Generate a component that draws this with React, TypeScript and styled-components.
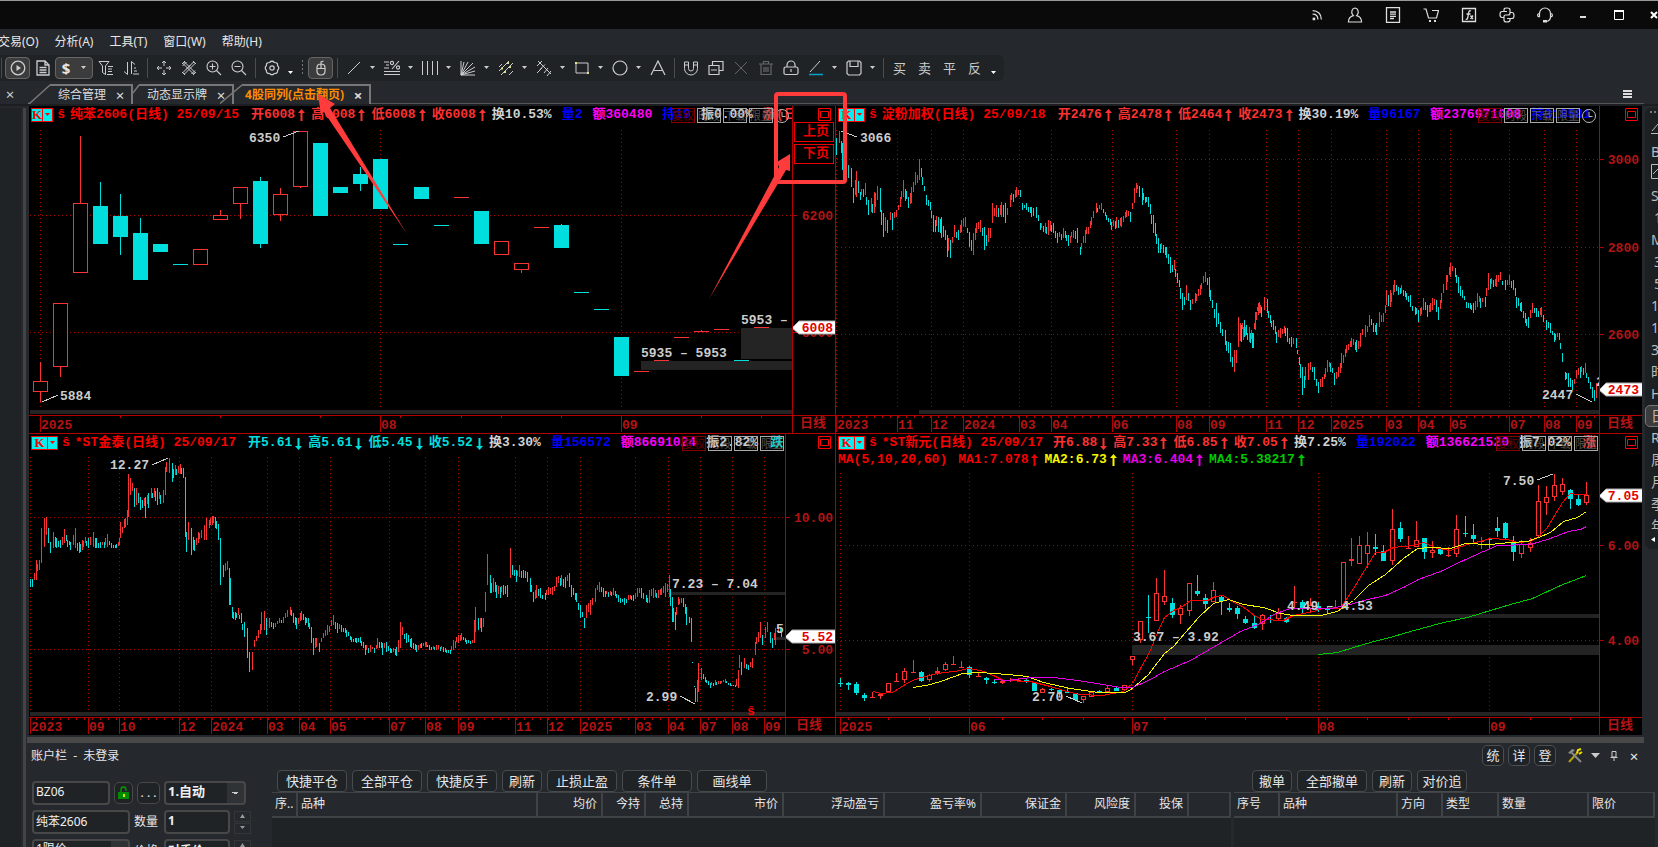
import React from 'react';
import styled, { createGlobalStyle } from 'styled-components';

const UI_FONT = '"Noto Sans", "Noto Sans CJK SC", sans-serif';
const CHART_FONT = '"Liberation Mono", "Noto Sans CJK SC", monospace';
const RED = '#fa3232';
const CYAN = '#00dede';
const AXIS = '#b40000';

const GlobalStyle = createGlobalStyle`
  * { box-sizing: border-box; }
  body { margin: 0; background: #25282d; overflow: hidden; font: 12px/16px ${UI_FONT}; color: #e6e6e6; }
  button, input, select { font: inherit; color: inherit; margin: 0; padding: 0; }
  button { background: none; border: 0; }
`;

/* ---------- page shell ---------- */
const Page = styled.div`position: relative; display: flex; flex-direction: column; width: 100%; height: 100vh; min-height: 600px; overflow: hidden;`;
const TitleBar = styled.header`display: flex; justify-content: flex-end; flex: none; height: 29px; margin-right: -14px; border-top: 1px solid #999; background: #0a0a0a;`;
const TitleButton = styled.button<{ $w?: number }>`display: flex; align-items: center; justify-content: center; flex: none; width: ${p => p.$w ?? 38}px; height: 28px; color: #ddd;`;
const MenuBar = styled.nav`display: flex; flex: none; align-items: center; gap: 16px; height: 26px; margin-left: -2px;`;
const MenuItem = styled.button`white-space: nowrap; line-height: 16px;`;
const Toolbar = styled.div`display: flex; flex: none; align-items: center; align-self: flex-start; height: 26px; margin-left: -3px; padding-right: 4px; background: #1f2326; border-radius: 0 6px 6px 0;`;
const ToolButton = styled.button<{ $on?: boolean; $dim?: boolean }>`
  display: flex; align-items: center; justify-content: center; width: 25px; height: 22px;
  font-size: 13px; line-height: 20px; color: ${p => (p.$dim ? '#666' : '#ccc')};
  border-radius: 4px; border: 1px solid ${p => (p.$on ? '#666' : 'transparent')}; background: ${p => (p.$on ? '#3c3c3c' : 'none')};
`;
const CurrencyButton = styled.button`display: flex; align-items: center; justify-content: center; gap: 11px; width: 38px; height: 22px; border: 1px solid #666; border-radius: 4px; background: #3c3c3c; font-size: 15px; font-weight: 700;`;
const CaretButton = styled.button<{ $low?: boolean }>`display: flex; justify-content: center; align-items: ${p => (p.$low ? 'flex-end' : 'center')}; width: 13px; height: 14px;`;
const ToolSep = styled.span`width: 8px; height: 20px; background: linear-gradient(#4a4d50, #4a4d50) center / 1px 100% no-repeat;`;
const ToolGrip = styled.span`width: 10px; height: 16px; margin-right: 1px; background: repeating-linear-gradient(#777 0 2px, transparent 2px 4px) center / 1px 100% no-repeat;`;

const TabStrip = styled.div`display: flex; flex: none; height: 25px; padding-top: 3px; border-bottom: 2px solid #1c1e21;`;
const DockClose = styled.button`width: 28px; height: 20px; padding-right: 8px; font-size: 15px; line-height: 18px; color: #ccc;`;
const Tab = styled.div<{ $overlap?: boolean }>`display: flex; flex: none; position: relative; margin-left: ${p => (p.$overlap ? -14 : 0)}px;`;
const TabFace = styled.div<{ $on?: boolean }>`
  display: flex; align-items: center; height: 20px; gap: 8px; padding: 0 5px 0 ${p => (p.$on ? 3 : 8)}px; border: solid #777; border-width: 2px 2px 0 0;
  color: ${p => (p.$on ? '#ff8c00' : '#ddd')}; font-weight: ${p => (p.$on ? 700 : 400)};
`;
const TabLabel = styled.button`white-space: nowrap; font-weight: inherit;`;
const TabClose = styled.button`width: 12px; font-size: 15px; line-height: 16px; color: #ddd;`;
const TabRule = styled.div`flex: 1; align-self: flex-end; height: 20px; border-bottom: 1px solid #555;`;
const TabMenu = styled.button`display: flex; align-items: center; justify-content: flex-end; width: 40px; height: 20px; padding: 0 12px 0 0; margin: 0 14px 0 -40px;`;

const Workspace = styled.div`display: flex; flex: 1; min-height: 0;`;
const LeftDock = styled.aside`flex: none; width: 29px; margin-top: 2px; background: linear-gradient(90deg, #1f2326 0 21px, #25282d 21px 23px, #444 23px 26px, #25282d 26px);`;
const Center = styled.main`display: flex; flex-direction: column; flex: 1; min-width: 0;`;
const RightDock = styled.aside`flex: none; width: 16px; padding-left: 3px; overflow: hidden;`;
const PeriodList = styled.div`display: flex; flex-direction: column; width: 40px; margin-top: 2px; background: #1c2023; border-radius: 6px; color: #bbb; font-size: 14px;`;
const PeriodButton = styled.button<{ $on?: boolean; $indent?: boolean }>`
  flex: none; width: 40px; height: 22px; padding-left: ${p => (p.$indent ? 8 : 5)}px; line-height: 20px; text-align: left;
  border-radius: 5px; border: 1px solid ${p => (p.$on ? '#777' : 'transparent')}; background: ${p => (p.$on ? '#3c3c3c' : 'none')};
`;
const CollapseButton = styled.button`display: flex; flex: none; align-items: flex-start; width: 40px; height: 12px; padding: 0 0 0 6px;`;
const DockDots = styled.span`flex: none; height: 11px; margin-left: 5px; background: repeating-linear-gradient(90deg, #777 0 2px, transparent 2px 4px) 0 3px / 100% 2px no-repeat;`;

/* ---------- charts ---------- */
const ChartGrid = styled.div`display: grid; flex: 1; min-height: 0; grid-template: 328fr 301fr / 807fr 806fr; background: #000;`;
const ChartPanel = styled.section<{ $axis: number; $left?: boolean; $top?: boolean }>`
  display: grid; grid-template-columns: minmax(0, 1fr) ${p => p.$axis}px; min-width: 0; min-height: 0; overflow: hidden;
  border: solid ${AXIS}; border-width: 0 ${p => (p.$left ? 1 : 0)}px ${p => (p.$top ? 1 : 0)}px 0;
  font: bold 13px/16px ${CHART_FONT};
`;
const PlotColumn = styled.div`position: relative; display: flex; flex-direction: column; min-width: 0; min-height: 0; overflow: hidden;`;
const AxisColumn = styled.div`display: flex; flex-direction: column; min-height: 0; border-left: 1px solid ${AXIS};`;
const Legend = styled.div`display: flex; flex: none; align-items: center; height: 18px; padding-left: 2px; white-space: pre;`;
const LegendItem = styled.span<{ $c: string; $gap?: number }>`display: flex; flex: none; align-items: center; color: ${p => p.$c}; margin-left: ${p => p.$gap ?? 10}px;`;
const ArrowCell = styled.span`display: flex; justify-content: center; width: 13px;`;
const KindSwitch = styled.button`display: flex; align-items: stretch; width: 27px; height: 14px; margin-right: 2px; background: #00f0f0; border: 1px solid red; color: red; font: bold 13px/12px "Liberation Serif", serif;`;
const KindLetter = styled.span`flex: 1; border-right: 1px solid red;`;
const KindCaret = styled.span`display: flex; align-items: center; justify-content: center; width: 9px;`;
const Indicators = styled.div`display: flex; flex: none; height: 16px; padding-left: 2px; line-height: 14px; white-space: pre;`;
const Badges = styled.div<{ $right: number }>`position: absolute; top: 2px; right: ${p => p.$right}px; display: flex; align-items: center; gap: 2px;`;
const Badge = styled.button<{ $red?: boolean }>`
  width: 24px; height: 15px; font: 11px/13px ${UI_FONT}; white-space: nowrap; border: 1px solid ${p => (p.$red ? '#800' : '#aaa')};
  color: ${p => (p.$red ? '#700000' : 'rgba(140, 140, 140, 0.6)')};
`;
const Canvas = styled.svg`display: block; flex: 1; width: 100%; min-height: 0; font: bold 13px ${CHART_FONT};`;
const TimeScale = styled.svg`display: block; flex: none; width: 100%; height: 18px; border-top: 1px solid ${AXIS}; font: bold 13px ${CHART_FONT};`;
const PeriodLabel = styled.div<{ $pad: number }>`flex: none; height: 18px; padding-left: ${p => p.$pad}px; border-top: 1px solid ${AXIS}; color: #b41414; line-height: 16px;`;
const RestoreButton = styled.button`flex: none; width: 13px; height: 13px; margin: 2px 4px 1px auto;`;
const PageButton = styled.button`flex: none; width: 40px; height: 20px; margin: 0 0 2px 1px; border: 1px solid #e00; color: #e00; font: bold 13px/18px ${CHART_FONT}; padding-left: 4px;`;

/* ---------- account panel ---------- */
const Splitter = styled.div`flex: none; height: 6px; margin: 2px -2px 0; background: #484848;`;
const Account = styled.section`display: flex; flex-direction: column; flex: none; height: 104px; overflow: hidden; margin-right: -16px;`;
const AccountHead = styled.div`display: flex; flex: none; align-items: center; height: 27px; padding: 0 17px 2px 2px; white-space: pre;`;
const HeadTools = styled.div`display: flex; align-items: center; gap: 4px; margin-left: auto;`;
const ViewButtons = styled.div`display: flex; gap: 4px; margin-right: 5px;`;
const SquareButton = styled.button`width: 22px; height: 21px; border: 1px solid #4c4f52; border-radius: 5px; background: #1f2326; font-size: 13px; line-height: 17px;`;
const PlainButton = styled.button<{ $w: number }>`display: flex; align-items: center; justify-content: center; width: ${p => p.$w}px; height: 20px; font-size: 15px;`;
const AccountBody = styled.div`display: flex; flex: 1; min-height: 0;`;
const OrderForm = styled.form`display: flex; flex-direction: column; flex: none; gap: 5px; width: 243px; padding: 11px 0 0 3px;`;
const FormRow = styled.div`display: flex; flex: none; align-items: center; gap: 4px; height: 24px;`;
const Field = styled.input<{ $w: number; $b?: boolean }>`
  flex: none; width: ${p => p.$w}px; height: 24px; padding: 0 0 3px 2px; border: 2px solid #484848; border-radius: 4px; background: #1f2326; color: #f0f0f0; font-weight: ${p => (p.$b ? 700 : 400)};
`;
const Choice = styled.select<{ $w: number; $b?: boolean }>`
  appearance: none; flex: none; width: ${p => p.$w}px; height: 24px; padding: 0 0 4px 2px; border: 2px solid #484848; border-radius: 4px; color: #f0f0f0; font-size: ${p => (p.$b ? 13 : 12)}px; font-weight: ${p => (p.$b ? 700 : 400)};
  background: linear-gradient(45deg, transparent 50%, #ccc 50%) right 9px center / 3px 3px no-repeat, linear-gradient(-45deg, transparent 50%, #ccc 50%) right 6px center / 3px 3px no-repeat, linear-gradient(90deg, #1f2326 calc(100% - 17px), #303336 0);
`;
const FormLabel = styled.label`flex: none; width: 26px;`;
const SmallButton = styled.button<{ $w: number }>`display: flex; align-items: center; justify-content: center; width: ${p => p.$w}px; height: 22px; border: 1px solid #484848; border-radius: 5px; background: #1f2326;`;
const Spinner = styled.div`display: flex; flex-direction: column; gap: 1px;`;
const SpinButton = styled.button`display: flex; align-items: center; justify-content: center; width: 17px; height: 11px; border: 1px solid #333638;`;
const GridPane = styled.div<{ $w?: number }>`display: flex; flex-direction: column; flex: ${p => (p.$w ? `0 1 ${p.$w}px` : '1 1 0')}; min-width: 0; margin-right: 3px; overflow: hidden;`;
const ActionBar = styled.div<{ $pad: number }>`display: flex; flex: none; gap: 5px; height: 22px; padding-left: ${p => p.$pad}px;`;
const ActionButton = styled.button<{ $w: number }>`flex: none; width: ${p => p.$w}px; height: 22px; border: 1px solid #484b4e; border-radius: 4px; background: #1f2326; font-size: 13px; line-height: 19px; white-space: nowrap;`;
const TableArea = styled.div`flex: 1; background: #1f2326; overflow: hidden;`;
const Table = styled.table`width: 100%; border-collapse: collapse; table-layout: fixed; background: #25282d;`;
const Th = styled.th<{ $w?: number; $right?: boolean }>`
  width: ${p => (p.$w ? `${p.$w}px` : 'auto')}; height: 24px; padding: 0 4px 1px 3px; border: 1px solid #404346; border-width: 1px 2px 2px 0;
  font-weight: 400; text-align: ${p => (p.$right ? 'right' : 'left')}; white-space: nowrap; overflow: hidden;
`;
const Overlay = styled.svg`position: absolute; inset: 0; width: 100%; height: 100%; pointer-events: none;`;

/* ---------- icons ---------- */
const Glyph = ({ d, fill, children, size = 16, w = 1 }: { d?: string; fill?: string; children?: React.ReactNode; size?: number; w?: number }) => (
  <svg width={size} height={size} viewBox="0 0 16 16" fill="none" stroke="currentColor" strokeWidth={w} aria-hidden="true">
    {d && <path d={d} />}
    {fill && <path d={fill} fill="currentColor" stroke="none" />}
    {children}
  </svg>
);
const Caret = ({ c = '#ccc' }: { c?: string }) => (
  <svg width="5" height="4" viewBox="0 0 5 4" aria-hidden="true"><path d="M0 0h5L2.5 3z" fill={c} /></svg>
);
const Arrow = ({ up }: { up: boolean }) => (
  <ArrowCell>
    <svg width="7" height="13" viewBox="0 0 7 13" role="img" aria-label={up ? '涨' : '跌'} fill="currentColor">
      <path d={up ? 'M3.500 0L7 4H4.500v8h-2V4H0z' : 'M3.500 13L7 9H4.500V1h-2v8H0z'} />
    </svg>
  </ArrowCell>
);

const TITLE_ICONS: [string, React.ReactNode][] = [
  ['订阅', <Glyph size={14} w={1.4} d="M3 3c6 0 10 4 10 10M3 7c4 0 6 2 6 6" fill="M3 11h3v3H3z" />],
  ['用户', <Glyph w={1.2} d="M8 1a3.5 4 0 0 1 2.4 6.6L9.6 8.600c3 .8 5 2.600 5 6.400H1.400c0-3.800 2-5.600 5-6.400l-.8-1A3.500 4 0 0 1 8 1z" />],
  ['资讯', <Glyph w={1.3} d="M1.500 .7h13v14.600h-13zM5 5h6M5 7.200h6M5 9.400h6M5 11.500h4" />],
  ['商城', <Glyph w={1.2} d="M.5 2h2.500l2.500 9h8l2-7.500H9" fill="M6 13h2v2H6zM11 13h2v2h-2z" />],
  ['公式', <Glyph w={1.3} d="M1.500 1.500h13v13h-13zM10 4c-2-.8-2.200.5-2.500 2.500L6.700 11c-.3 1.200-1 1.500-2 1M5.500 7h4M9.500 8.500l2.500 3.500M12 8.500l-2.500 3.500" />],
  ['Python', <Glyph w={1.2} d="M5 4.500V2.700C5 1.300 6 1 8 1s3 .4 3 1.700V6c0 1.500-1 2-2 2H6.500C5.500 8 5 8.600 5 9.500v1H3C1.500 10.500 1 9.500 1 7.600s.6-3.100 2-3.100h5M11 11.500v1.800c0 1.300-1 1.700-3 1.700s-3-.4-3-1.700V10M11 5.500h2c1.500 0 2 1 2 2.900s-.6 3.100-2 3.100H8" />],
  ['客服', <Glyph w={1.2} d="M2.500 10V6.500a5.500 5.500 0 0 1 11 0V10M2.500 6.500C1 6.500.6 7.300.6 8.300S1 10 2.500 10M13.500 6.500c1.500 0 1.900.8 1.900 1.800s-.4 1.700-1.900 1.700c0 2.500-1.500 3.700-3.500 4.300" fill="M6 13h4v2.500H6z" />],
];

const I = {
  play: <Glyph fill="M6.500 5l4.500 3-4.500 3z"><circle cx="8" cy="8" r="6.800" strokeWidth="1.300" /></Glyph>,
  doc: <Glyph w={1.300} d="M2 1h8l4 4v10H2zM10 1v4h4M4.500 7.500h7M4.500 10h7M4.500 12.500h7" />,
  filter: <Glyph d="M1 1.500h10L7.500 6v8.500l-3-2V6zM10 6.500h5M10 9h4M10 11.500h4M9 14.500h6" />,
  sort: <Glyph d="M4.500 2v12.500L1 11.500M8.500 14V1.500L12 4.500M11 8h2M11 11h3M10 14h6" />,
  move: <Glyph d="M8 1v5M8 10v5M1 8h5M10 8h5M6 3l2-2 2 2M6 13l2 2 2-2M3 6L1 8l2 2M13 6l2 2-2 2" />,
  erase: <Glyph d="M2 3.500L3.500 2l10.500 10.500-1.500 1.500zM14 3.500L12.500 2 2 12.500 3.500 14zM1.500 6l4-4M5 9.500l4.500-4.500M10.500 14l3.500-3.500M1 4l3-3M12 1l3 3M1 12l3 3M15 12l-3 3" />,
  zoomIn: <Glyph w={1.100} d="M10.500 10.500L15 15M3.500 6.500h6M6.500 3.500v6"><circle cx="6.500" cy="6.500" r="5.500" /></Glyph>,
  zoomOut: <Glyph w={1.100} d="M10.500 10.500L15 15M3.500 6.500h6"><circle cx="6.500" cy="6.500" r="5.500" /></Glyph>,
  gear: <Glyph w={1.200} d="M5.500 2.500Q8 0 10.500 2.500Q14 2.500 13.500 5.500Q16 8 13.500 10.500Q14 13.500 10.500 13.500Q8 16 5.500 13.500Q2 13.500 2.500 10.500Q0 8 2.500 5.500Q2 2.500 5.500 2.500z"><circle cx="8" cy="8" r="2.200" /></Glyph>,
  mouse: <Glyph w={1.200} d="M4 7.500c0-2.500 1.500-3.500 4-3.500s4 1 4 3.500V11c0 2.500-1.500 4-4 4s-4-1.500-4-4zM4 8.500h8M8 4v4.500M8 4V2l2.500-1" />,
  line: <Glyph d="M2 14L14 2" />,
  percent: <Glyph w={1.100} d="M0 2h5M2 5h3M0 8h5M0 11.500h16M0 14.500h16M15 1L8 9"><circle cx="8" cy="3" r="1.600" /><circle cx="14" cy="7.500" r="1.600" /></Glyph>,
  bars: <Glyph d="M.5 1v14M5.500 1v14M10.500 1v14M15.500 1v14" />,
  fan: <Glyph d="M1 1v14h14M1 15L4 2M1 15L8 2M1 15L13 3M1 15L15 7M1 15l14-4" />,
  channel: <Glyph d="M1 11L11 1M3 15L15 3M1 7l3-3M11 15l4-4"><path d="M3 8.500h2M9 3h2M6 12h2M11 7h2" stroke="#dede90" strokeWidth="2" /></Glyph>,
  fork: <Glyph d="M2 1l13 13M1 6l5-5M4 9.500L9 4.500M8 13l4-5M11 16l4-5M1 13l5-5" />,
  rect: <Glyph d="M2 3h12v10H2z"><path d="M1 2h2v2H1zM13 12h2v2h-2z" fill="#e6e690" stroke="none" /></Glyph>,
  circle: <Glyph w={1.200}><circle cx="8" cy="8" r="7" /></Glyph>,
  text: <Glyph w={1.200} d="M1 15L8 1l7 14M4 10.500h8" />,
  magnet: <Glyph d="M1.500 2v6.500a6.500 6.500 0 0 0 13 0V2h-4v6.500a2.500 2.500 0 0 1-5 0V2zM1.500 5h4M10.500 5h4" />,
  copy: <Glyph w={1.200} d="M1 5.500h10v9H1zM4.500 5.500v-4h10.500v9h-4M3 10h6" />,
  cross: <Glyph d="M2 2l12 12M14 2L2 14" />,
  trash: <Glyph w={1.200} d="M1 4h14M3 4v10.500h10V4M5.500 4V1.500h5V4M6 7v5M8 7v5M10 7v5" />,
  lock: <Glyph w={1.200} d="M3 7h10q2 0 2 2v4q0 1.500-2 1.500H3q-2 0-2-1.500V9q0-2 2-2zM4 7V5a4 4 0 0 1 8 0v2M8 9v3" />,
  pen: <Glyph d="M2 12L12 1"><path d="M1 14.500h14" stroke="#00a0c8" strokeWidth="1.500" /></Glyph>,
  save: <Glyph w={1.200} d="M2.500 1h11L15 2.500v11L13.500 15h-11L1 13.500v-11zM4 1v5.500h8V1" />,
};

type Tool = { k: 'b' | 'd' | 's' | 'g' | 'c' | 'm'; label?: string; icon?: React.ReactNode; on?: boolean; dim?: boolean };
const TOOLS: Tool[] = [
  { k: 's' }, { k: 'b', label: '播放', icon: I.play, on: true }, { k: 'b', label: '文档', icon: I.doc },
  { k: 'm', label: '币种' }, { k: 'b', label: '筛选', icon: I.filter }, { k: 'b', label: '排序', icon: I.sort }, { k: 's' },
  { k: 'b', label: '移动', icon: I.move }, { k: 'b', label: '清除', icon: I.erase }, { k: 'b', label: '放大', icon: I.zoomIn }, { k: 'b', label: '缩小', icon: I.zoomOut }, { k: 's' },
  { k: 'b', label: '设置', icon: I.gear }, { k: 'c', label: '更多设置' }, { k: 'g' }, { k: 'b', label: '鼠标', icon: I.mouse, on: true }, { k: 's' },
  { k: 'd', label: '直线', icon: I.line }, { k: 'd', label: '百分比', icon: I.percent }, { k: 'd', label: '周期线', icon: I.bars }, { k: 'd', label: '扇形', icon: I.fan },
  { k: 'd', label: '通道', icon: I.channel }, { k: 'd', label: '叉线', icon: I.fork }, { k: 'd', label: '矩形', icon: I.rect }, { k: 'd', label: '圆形', icon: I.circle },
  { k: 'b', label: '文字', icon: I.text }, { k: 's' },
  { k: 'b', label: '磁吸', icon: I.magnet }, { k: 'b', label: '复制', icon: I.copy }, { k: 'b', label: '关闭', icon: I.cross, dim: true }, { k: 'b', label: '删除', icon: I.trash, dim: true },
  { k: 'b', label: '锁定', icon: I.lock }, { k: 'd', label: '颜色', icon: I.pen }, { k: 'd', label: '保存', icon: I.save }, { k: 's' },
  { k: 'b', label: '买', icon: '买' }, { k: 'b', label: '卖', icon: '卖' }, { k: 'b', label: '平', icon: '平' }, { k: 'b', label: '反', icon: '反' }, { k: 'c', label: '更多' },
];

const ToolItem = ({ t }: { t: Tool }) => {
  if (t.k === 's') return <ToolSep />;
  if (t.k === 'g') return <ToolGrip />;
  if (t.k === 'c') return <CaretButton $low aria-label={t.label}><Caret c="#fff" /></CaretButton>;
  if (t.k === 'm') return <CurrencyButton aria-label={t.label}>$<Caret /></CurrencyButton>;
  return (
    <>
      <ToolButton $on={t.on} $dim={t.dim} aria-label={t.label}>{t.icon}</ToolButton>
      {t.k === 'd' && <CaretButton aria-label={`${t.label}选项`}><Caret /></CaretButton>}
    </>
  );
};

/* ---------- chart data ---------- */
type Candle = [x: number, hi: number, top: number, bot: number, lo: number, up: number];

const BENZENE: [hi: number, top: number, bot: number, lo: number, up: number][] = [
  [362, 381, 392, 402, 1], [303, 303, 367, 377, 1], [136, 203, 273, 273, 1], [182, 206, 244, 244, 0], [194, 216, 237, 255, 0],
  [218, 233, 280, 280, 0], [244, 244, 252, 252, 0], [264, 264, 265, 265, 0], [249, 249, 265, 265, 1], [210, 215, 220, 220, 1],
  [187, 187, 204, 219, 1], [177, 181, 244, 248, 0], [188, 194, 215, 221, 1], [131, 131, 187, 188, 1], [143, 143, 216, 216, 0],
  [187, 187, 193, 193, 0], [167, 174, 184, 191, 0], [159, 159, 209, 209, 0], [244, 244, 245, 245, 0], [187, 187, 199, 199, 0],
  [225, 225, 226, 226, 0], [197, 197, 198, 198, 1], [211, 211, 244, 244, 0], [241, 241, 255, 255, 1], [263, 263, 270, 273, 1],
  [227, 227, 228, 228, 1], [224, 225, 248, 248, 0], [292, 292, 293, 293, 0], [309, 309, 310, 310, 0], [337, 337, 376, 376, 0],
  [371, 371, 372, 372, 1], [360, 360, 361, 361, 1], [337, 337, 338, 338, 1], [330, 331, 332, 332, 1], [329, 329, 330, 330, 1],
  [360, 360, 361, 361, 0], [327, 327, 328, 328, 1],
];

/* Price envelopes: "x top bottom" triples in thirds of a pixel. */
const STARCH_A = '20 115 165,28 93 130,38 130 210,45 190 240,55 195 235,63 205 260,70 265 308,80 213 290,90 275 300,105 248 285,116 300 345,123 295 335,132 275 340,143 258 300,150 265 335,160 340 412,172 360 400,180 335 360,187 340 390,200 330 350,210 290 320,220 240 290,235 290 325,245 260 310,255 215 255,268 178 240,278 230 255,288 285 315,300 305 330,310 345 395,325 350 395,335 350 415,345 390 420,352 405 472,361 420 475,372 375 410,385 390 420,395 360 395,405 350 380,418 395 440,430 400 465,440 370 400,452 360 395,463 380 450,475 385 425,488 310 370,500 315 350,515 305 350,527 310 370,540 285 320,560 260 290,570 270 290,577 310 330,590 310 330,605 320 350,618 320 355,630 370 390,645 370 400,655 360 405,670 370 400,682 400 430,700 385 415,715 405 438,730 390 415,742 385 430,750 440 465,765 390 430,785 350 375,798 310 340,815 310 330,830 345 360,845 365 390,860 350 385,875 350 380,890 330 350,900 335 365,912 265 310,918 250 280,928 258 290,936 265 315,945 290 310,955 290 320,970 345 400,985 415 460,1000 435 460,1010 440 475,1022 470 520,1032 480 510,1042 520 550,1057 580 630,1070 555 600,1082 600 630,1095 580 610,1110 555 585,1125 515 545,1137 530 590,1147 600 625,1160 610 680,1172 665 700,1185 690 735,1200 730 785,1213 750 815,1225 650 740,1240 680 720,1257 680 710,1268 700 745,1278 635 660,1287 605 640';
const STARCH_B = '3 705 745,14 690 740,28 710 755,40 730 775,47 665 720,55 640 675,65 650 680,73 622 660,81 628 670,90 675 700,100 690 720,110 725 760,120 715 745,132 708 730,143 715 755,155 740 770,168 745 775,178 800 825,187 830 915,197 830 870,205 820 870,212 815 840,222 830 870,235 875 908,247 860 890,262 810 845,272 820 845,283 850 885,295 830 860,305 790 835,320 765 790,335 745 770,350 750 785,362 730 770,375 705 740,387 675 710,400 700 725,410 700 735,418 665 710,430 670 695,440 600 645,450 600 650,464 570 605,475 590 615,485 585 610,500 610 630,512 615 650,525 650 675,535 660 695,550 625 660,562 645 680,577 625 660,588 630 665,596 650 690,605 610 640,618 555 600,632 520 560,645 535 560,655 560 610,668 600 625,680 635 655,700 640 670,712 610 650,722 625 655,735 620 650,745 550 600,760 570 590,770 555 590,782 545 570,795 570 600,808 555 585,820 570 600,830 620 655,845 635 665,855 670 700,865 680 715,877 640 670,890 655 680,905 650 680,918 690 720,930 700 730,943 730 755,957 730 750,967 790 815,975 845 870,985 850 890,997 870 900,1010 840 865,1020 830 865,1035 820 850,1045 860 880,1057 890 925,1062 900 932,1070 880 925';
const JINTAI_A = '92 462 485,98 462 485,108 405 465,118 405 435,125 310 415,133 280 365,139 275 330,145 310 355,152 350 385,160 320 370,170 340 370,180 345 370,187 335 360,194 312 355,203 345 365,212 350 375,220 330 360,227 308 370,238 350 385,247 345 375,256 335 355,265 340 370,272 335 360,280 322 365,290 340 370,300 350 368,312 352 370,322 328 365,335 355 368,350 358 370,359 340 360,362 292 340,372 282 310,382 255 300,386 148 275,392 158 210,402 190 245,410 190 240,420 215 255,428 225 250,437 215 280,446 205 250,454 188 220,463 190 215,472 190 240,482 210 238,490 195 235,496 125 210,500 110 140,508 100 145,516 115 170,525 120 150,540 118 148,549 128 160,556 155 335,560 320 380,566 292 345,574 310 390,584 345 378,595 320 355,604 315 340,612 300 345,620 280 345,628 285 310,637 273 300,646 275 310,655 298 345,662 340 480,670 420 455,682 408 435,688 430 540,697 545 580,706 560 585,715 550 570,724 565 595,733 590 635,741 610 700,749 680 740,757 680 735,762 645 665,775 615 640,785 560 615,793 558 615,800 580 630,808 580 610,820 595 612,838 578 595,850 575 595,862 555 575,870 547 570,880 565 595,890 580 612,905 558 585,915 575 600,925 580 605,934 605 655,940 640 690,950 640 665,958 655 680,970 625 640,982 600 630,1000 570 600,1012 595 625,1025 600 620,1040 615 635,1055 635 650,1070 640 655,1080 635 655,1095 660 690,1110 660 680,1123 670 685,1133 640 670,1148 655 690,1158 650 680,1170 670 685,1190 665 692,1200 590 670,1208 605 630,1220 625 655,1235 640 670,1250 660 680,1265 655 670,1280 650 665';
const JINTAI_B = '3 655 668,16 650 665,28 660 675,50 660 675,70 665 680,90 675 688,100 645 675,115 630 655,125 625 645,140 645 658,158 645 655,162 585 655,167 545 620,175 580 615,185 580 620,197 500 560,202 388 480,210 450 505,220 460 500,230 480 520,240 485 520,250 480 510,262 480 515,270 370 460,278 420 450,288 435 470,298 420 455,310 435 460,322 440 470,330 460 500,340 500 530,350 480 520,362 490 520,375 505 525,385 485 510,397 485 510,410 455 485,425 450 480,435 455 490,447 445 485,455 480 515,470 505 530,480 540 580,492 580 610,500 540 580,512 525 570,525 490 530,538 470 500,550 490 515,565 500 515,580 490 510,595 510 530,612 520 540,625 510 525,640 510 528,653 490 515,665 490 520,678 510 530,688 495 535,700 490 520,715 495 520,725 490 510,735 475 515,748 450 515,757 515 590,766 560 615,775 515 540,790 520 545,800 545 600,808 575 595,814 580 650,817 710 713,824 784 786,827 790 832,833 765 830,836 715 800,843 730 765,855 755 770,870 775 790,885 765 780,900 768 778,915 763 775,930 775 783,945 780 787,955 735 788,958 690 730,965 710 750,973 698 730,985 720 735,998 700 730,1005 650 690,1015 620 650,1020 590 640,1027 630 660,1035 605 640,1042 590 620,1050 620 655,1058 640 670,1067 610 660,1075 600 625,1085 620 635';

const XINYUAN: Candle[] = ([
  [31, 758, 773, 776, 786, 0], [55, 770, 774, 780, 795, 0], [79, 771, 777, 804, 810, 0], [103, 804, 810, 819, 828, 0], [128, 800, 815, 818, 818, 1],
  [151, 803, 806, 812, 822, 1], [175, 774, 774, 802, 802, 1], [199, 744, 768, 770, 770, 1], [223, 728, 738, 765, 773, 1], [250, 705, 741, 743, 743, 1],
  [274, 738, 741, 768, 770, 0], [298, 747, 750, 766, 770, 1], [322, 726, 738, 744, 750, 1], [346, 711, 717, 735, 739, 1], [370, 693, 717, 719, 721, 1],
  [394, 708, 726, 728, 730, 1], [418, 724, 727, 750, 758, 0], [445, 740, 753, 755, 755, 1], [469, 755, 759, 765, 777, 0], [493, 765, 770, 774, 777, 0],
  [517, 765, 768, 774, 777, 1], [541, 759, 765, 769, 770, 1], [565, 759, 765, 767, 768, 1], [589, 762, 766, 768, 774, 0], [613, 770, 771, 798, 798, 0],
  [637, 788, 792, 803, 805, 1], [664, 788, 792, 795, 797, 0], [688, 793, 795, 803, 812, 0], [712, 786, 800, 804, 805, 0], [736, 803, 804, 825, 828, 0],
  [760, 812, 814, 825, 833, 1], [784, 800, 802, 815, 816, 1], [808, 795, 797, 801, 803, 0], [832, 784, 789, 802, 803, 1], [859, 786, 790, 798, 798, 0],
  [883, 780, 781, 796, 799, 1], [907, 693, 693, 704, 720, 1], [931, 588, 588, 645, 655, 1], [955, 510, 575, 578, 625, 0], [979, 459, 504, 588, 588, 1],
  [1003, 435, 513, 531, 540, 1], [1027, 519, 534, 570, 578, 0], [1051, 540, 549, 570, 597, 1], [1078, 474, 474, 558, 573, 1], [1102, 450, 498, 507, 513, 0],
  [1126, 507, 519, 537, 552, 0], [1150, 471, 495, 531, 531, 1], [1174, 510, 516, 528, 570, 0], [1198, 534, 549, 555, 560, 0], [1222, 543, 549, 567, 581, 0],
  [1246, 573, 582, 594, 597, 0], [1273, 573, 594, 608, 612, 0], [1297, 567, 570, 597, 614, 1], [1321, 570, 582, 585, 594, 0], [1345, 549, 564, 582, 587, 1],
  [1369, 576, 580, 591, 594, 0], [1393, 483, 531, 534, 550, 1], [1417, 525, 531, 550, 565, 0], [1441, 519, 540, 553, 565, 1], [1466, 530, 543, 555, 560, 0],
  [1492, 545, 550, 555, 568, 0], [1516, 525, 545, 548, 550, 1], [1540, 411, 411, 545, 552, 1], [1564, 339, 402, 407, 423, 1], [1588, 333, 360, 416, 416, 1],
  [1612, 321, 360, 386, 428, 1], [1636, 327, 366, 371, 390, 0], [1660, 360, 378, 408, 408, 0], [1687, 252, 312, 407, 420, 1], [1711, 291, 309, 342, 350, 0],
  [1735, 333, 369, 371, 371, 1], [1759, 288, 345, 366, 366, 1], [1783, 339, 339, 381, 402, 0], [1807, 348, 376, 383, 399, 1], [1831, 366, 373, 388, 390, 0],
  [1855, 366, 390, 392, 395, 1], [1879, 270, 312, 388, 395, 1], [1906, 273, 324, 326, 335, 0], [1930, 297, 330, 342, 350, 0], [1954, 336, 348, 350, 372, 1],
  [1978, 339, 342, 344, 372, 0], [2002, 276, 309, 318, 335, 0], [2026, 291, 294, 339, 345, 0], [2050, 333, 350, 381, 407, 0], [2074, 345, 357, 386, 399, 1],
  [2101, 339, 354, 368, 380, 1], [2125, 180, 228, 333, 340, 1], [2149, 183, 216, 234, 270, 1], [2173, 147, 180, 216, 228, 1], [2197, 159, 177, 201, 210, 1],
  [2221, 192, 195, 222, 252, 0], [2245, 210, 222, 240, 243, 0], [2269, 171, 210, 234, 240, 1],
] as Candle[]);

const AVERAGES: [string, string][] = [
  ['#fa0000', '128,799 150,805 185,802 210,785 240,768 270,757 320,744 390,735 410,729 450,736 490,750 520,766 600,769 660,783 700,795 745,808 815,811 880,797 905,775 930,730 958,680 980,620 1003,575 1028,555 1055,544 1080,524 1130,526 1155,512 1178,509 1200,525 1246,548 1275,572 1295,583 1360,585 1390,570 1450,558 1475,550 1530,548 1570,490 1635,382 1660,382 1690,366 1750,360 1780,352 1820,370 1860,375 1910,358 1980,338 2030,342 2060,352 2100,348 2125,333 2150,305 2195,232 2220,205 2240,208 2270,208'],
  ['#f5f500', '250,785 300,778 340,766 395,743 450,740 530,746 590,754 640,770 720,788 805,801 885,802 905,790 955,748 1003,685 1030,662 1105,575 1150,533 1195,523 1240,538 1300,545 1350,565 1390,570 1470,571 1520,558 1570,525 1615,480 1665,447 1720,398 1760,370 1800,365 1860,370 1905,355 1980,358 2040,350 2090,348 2125,335 2160,320 2200,288 2240,275 2268,258'],
  ['#e600e6', '493,763 530,764 600,757 670,757 740,766 820,776 870,785 905,785 955,766 1003,738 1080,705 1174,650 1230,618 1290,595 1330,568 1380,550 1500,550 1560,538 1600,525 1665,510 1720,485 1765,462 1830,437 1900,405 1960,378 2000,361 2100,357 2150,343 2215,318 2250,312 2268,304'],
  ['#00c800', '1465,688 1520,682 1570,667 1620,650 1690,634 1740,617 1840,592 1910,576 1980,555 2040,538 2105,518 2150,498 2190,480 2230,465 2268,451'],
];

const parse = (s: string, x0: number, y0: number) =>
  s.split(',').map(t => {
    const [x, a, b] = t.split(' ').map(Number);
    return [x0 + x / 3, y0 + a / 3, y0 + b / 3];
  });

const Bars = ({ pts }: { pts: number[][] }) => {
  const out: React.ReactNode[] = [];
  let prev = (pts[0][1] + pts[0][2]) / 2;
  let last = -1;
  let up = false;
  pts.forEach((p, i) => {
    const n = pts[i + 1];
    const steps = n ? Math.max(1, Math.round((n[0] - p[0]) / 1.800)) : 1;
    const jump = n && Math.abs(n[1] - p[1]) > 25;
    for (let k = 0; k < steps; k++) {
      const f = k / steps;
      const x = Math.floor(n ? p[0] + (n[0] - p[0]) * f : p[0]);
      if (x === last) continue;
      last = x;
      const g = jump ? 0 : f;
      const top = n ? p[1] + (n[1] - p[1]) * g : p[1];
      const bot = n ? p[2] + (n[2] - p[2]) * g : p[2];
      const cut = k === 0 ? 0 : (0.250 + ((x * 7) % 5) / 14) * (bot - top);
      const side = (x * 13) % 3 / 2;
      const y = Math.round(top + cut * side);
      const end = Math.round(bot - cut * (1 - side));
      const mid = (y + end) / 2;
      if (Math.abs(mid - prev) > 0.500) up = mid < prev;
      prev = mid;
      out.push(<rect key={`${i}-${k}`} x={x} y={y} width="1" height={Math.max(1, end - y)} fill={up ? RED : CYAN} />);
    }
  });
  return <>{out}</>;
};

const CandleMark = ({ x, w, c }: { x: number; w: number; c: number[] }) => {
  const [hi, top, bot, lo, up] = c.map((v, i) => (i < 4 ? Math.round(v) : v));
  const h = Math.max(1, bot - top);
  const color = up ? RED : CYAN;
  const m = x + (w - 1) / 2;
  return (
    <g fill={color}>
      {hi < top && <rect x={m} y={hi} width="1" height={top - hi} />}
      {lo > bot && <rect x={m} y={bot} width="1" height={lo - bot} />}
      {up && h > 2 ? <rect x={x + 0.500} y={top + 0.500} width={w - 1} height={h - 1} fill="#000" stroke={RED} /> : <rect x={x} y={top} width={w} height={h} />}
    </g>
  );
};

type Mark = [x: number, y: number, text: string];
type Chart = {
  left: boolean; top: boolean; ox: number; axis: number; title: string;
  legend: [text: string, color: string, gap: number, arrow?: string][];
  indicators?: [text: string, color: string, gap: number, arrow?: string][];
  badgeRight: number; clock?: boolean;
  h: number[]; v: [number, string][]; ticks: number[]; y0: number; y1: number;
  strip: number; zones: number[][]; marks: Mark[]; leads: number[][];
  prices: [number, string][]; last: [number, string]; pager?: boolean;
  body: React.ReactNode;
};

const every = (a: number, b: number, s: number) => Array.from({ length: Math.floor((b - a) / s) + 1 }, (_, i) => Math.round(a + i * s));
const W = '#d2d2d2', BL = '#0000fa', MG = '#fa00fa', R1 = '#fa0000';

const CHARTS: Chart[] = [
  {
    left: true, top: true, ox: 29, axis: 44, title: '纯苯2606(日线) 25/09/15',
    legend: [['开6008', RED, 12, '↑'], ['高6008', RED, 3, '↑'], ['低6008', RED, 3, '↑'], ['收6008', RED, 3, '↑'], ['换10.53%', W, 3], ['量2', BL, 10], ['额360480', MG, 10], ['持19', BL, 10], ['振0.00%', W, 10], ['涨(日', RED, 10]],
    badgeRight: 3, clock: true, h: [215, 332], v: [[40, '2025'], [380, '08'], [621, '09']], ticks: [120, 220, 320, 400, 461, 501, 561, 701, 761], y0: 130, y1: 407,
    strip: 30, zones: [[741, 328, 60, 31], [641, 361, 160, 9]],
    marks: [[249, 142, '6350'], [60, 400, '5884'], [641, 357, '5935 – 5953'], [741, 324, '5953 – 6008']],
    leads: [[283, 137, 299, 131], [42, 402, 58, 395]],
    prices: [[215, '6200'], [332, '6000']], last: [328, '6008'], pager: true,
    body: BENZENE.map((c, i) => <CandleMark key={i} x={33 + 20 * i + (i > 18 ? 1 : 0)} w={15} c={c} />),
  },
  {
    left: false, top: true, ox: 836, axis: 43, title: '淀粉加权(日线) 25/09/18',
    legend: [['开2476', RED, 12, '↑'], ['高2478', RED, 3, '↑'], ['低2464', RED, 3, '↑'], ['收2473', RED, 3, '↑'], ['换30.19%', W, 3], ['量96167', BL, 10], ['额2376971008', MG, 10], ['持318581', BL, 10]],
    badgeRight: 3, clock: true, h: [159, 247, 334],
    v: [[836, '2023'], [897, '11'], [931, '12'], [963, '2024'], [1019, '03'], [1051, '04'], [1112, '06'], [1176, '08'], [1209, '09'], [1266, '11'], [1298, '12'], [1331, '2025'], [1386, '03'], [1418, '04'], [1450, '05'], [1509, '07'], [1544, '08'], [1576, '09']],
    ticks: every(842, 1596, 8), y0: 130, y1: 407, strip: 919, zones: [],
    marks: [[860, 142, '3066'], [1542, 399, '2447'], [1596, 386, '2473']], leads: [[841, 131, 857, 137], [1576, 394, 1592, 402]],
    prices: [[159, '3000'], [247, '2800'], [334, '2600']], last: [390, '2473'],
    body: <><Bars pts={parse(STARCH_A, 830, 100)} /><Bars pts={parse(STARCH_B, 1240, 90)} /></>,
  },
  {
    left: true, top: false, ox: 29, axis: 51, title: '*ST金泰(日线) 25/09/17',
    legend: [['开5.61', CYAN, 12, '↓'], ['高5.61', CYAN, 3, '↓'], ['低5.45', CYAN, 3, '↓'], ['收5.52', CYAN, 3, '↓'], ['换3.30%', W, 3], ['量156572', BL, 10], ['额86691024', MG, 10], ['振2.82%', W, 10], ['跌', CYAN, 12]],
    badgeRight: 1, h: [517, 649],
    v: [[30, '2023'], [88, '09'], [119, '10'], [179, '12'], [211, '2024'], [267, '03'], [299, '04'], [330, '05'], [389, '07'], [425, '08'], [458, '09'], [515, '11'], [547, '12'], [580, '2025'], [635, '03'], [668, '04'], [700, '07'], [732, '08'], [764, '09']],
    ticks: every(36, 780, 8), y0: 457, y1: 711, strip: 30, zones: [[671, 592, 120, 3], [775, 637, 12, 3]],
    marks: [[110, 469, '12.27'], [672, 588, '7.23 – 7.04'], [646, 701, '2.99'], [776, 633, '5.52']],
    leads: [[152, 465, 168, 458], [680, 696, 695, 704]],
    prices: [[517, '10.00'], [649, '5.00']], last: [637, '5.52'],
    body: (
      <>
        <Bars pts={parse(JINTAI_A, 0, 425)} /><Bars pts={parse(JINTAI_B, 420, 425)} />
        <text x="747" y="715" fill="red">ŝ</text>
      </>
    ),
  },
  {
    left: false, top: false, ox: 836, axis: 43, title: '*ST新元(日线) 25/09/17',
    legend: [['开6.88', RED, 10, '↓'], ['高7.33', RED, 3, '↑'], ['低6.85', RED, 3, '↑'], ['收7.05', RED, 3, '↑'], ['换7.25%', W, 3], ['量192022', BL, 10], ['额136621520', MG, 10], ['振7.02%', W, 10], ['涨', RED, 12]],
    indicators: [['MA(5,10,20,60)', R1, 0], ['MA1:7.078', R1, 11, '↑'], ['MA2:6.73', '#f5f500', 3, '↑'], ['MA3:6.404', '#e600e6', 3, '↑'], ['MA4:5.38217', '#00c800', 3, '↑']],
    badgeRight: 1, h: [545, 640], v: [[840, '2025'], [969, '06'], [1132, '07'], [1318, '08'], [1489, '09']],
    ticks: [848, 888, 929, 1002, 1042, 1083, 1124, 1164, 1205, 1245, 1286, 1327, 1367, 1408, 1448, 1530, 1570], y0: 473, y1: 711,
    strip: 836, zones: [[1132, 645, 480, 10], [1287, 614, 330, 4]],
    marks: [[1133, 641, '3.67 – 3.92'], [1287, 610, '4.49 – 4.53'], [1032, 701, '2.70'], [1503, 485, '7.50']],
    leads: [[1066, 696, 1082, 703], [1537, 480, 1553, 474]],
    prices: [[545, '6.00'], [640, '4.00']], last: [496, '7.05'],
    body: (
      <>
        {XINYUAN.map(([x, ...c]) => <CandleMark key={x} x={Math.floor(830 + x / 3) - 2} w={5} c={c.map((v, i) => (i < 4 ? 425 + v / 3 : v))} />)}
        <g transform="translate(830 425)">
          {AVERAGES.map(([c, p]) => (
            <polyline key={c} fill="none" stroke={c} strokeWidth="1" points={p.split(' ').map(q => q.split(',').map(v => Math.round(Number(v) / 3) + 0.500).join(',')).join(' ')} />
          ))}
        </g>
      </>
    ),
  },
];

const Run = ({ items }: { items: Chart['legend'] }) => (
  <>{items.map(([t, c, g, a]) => <LegendItem key={t} $c={c} $gap={g}>{t}{a && <Arrow up={a === '↑'} />}</LegendItem>)}</>
);

const ChartView = ({ c }: { c: Chart }) => {
  const oy = (c.top ? 106 : 434) + 18 + (c.indicators ? 16 : 0);
  const bottom = c.top ? 415 : 717;
  const axisTop = (c.top ? 122 : 450) + (c.pager ? 44 : 0);
  const right = c.axis - 4;
  return (
    <ChartPanel $axis={c.axis - (c.left ? 1 : 0)} $left={c.left} $top={c.top}>
      <PlotColumn>
        <Legend>
          <KindSwitch aria-label="K线类型"><KindLetter>K</KindLetter><KindCaret><Caret c="red" /></KindCaret></KindSwitch>
          <LegendItem $c={R1} $gap={2}>ŝ</LegendItem>
          <LegendItem $c={R1} $gap={5}>{c.title}</LegendItem>
          <Run items={c.legend} />
        </Legend>
        <Badges $right={c.badgeRight}>
          <Badge $red>复权</Badge><Badge>时段</Badge><Badge>下载</Badge><Badge>限量</Badge>
          {c.clock && <svg width="14" height="14" viewBox="0 0 14 14" fill="none" stroke="#bbb"><circle cx="7" cy="7" r="6.500" /><path d="M7 3v4.500h3.500" /></svg>}
        </Badges>
        {c.indicators && <Indicators><Run items={c.indicators} /></Indicators>}
        <Canvas>
          <g transform={`translate(${-c.ox} ${-oy})`} shapeRendering="crispEdges">
            {c.h.map(y => <line key={y} x1={c.ox + 1} x2={c.ox + 4000} y1={y + 0.500} y2={y + 0.500} stroke="#b00000" strokeDasharray="1 3" />)}
            {c.v.map(([x]) => <line key={x} x1={x + 0.500} x2={x + 0.500} y1={c.y0} y2={c.y1} stroke="#b00000" strokeDasharray="1 3" />)}
            {c.zones.map(([x, y, w, h]) => <rect key={x} x={x} y={y} width={w} height={h} fill="#242424" />)}
            <rect x={c.strip} y={bottom - 5} width="4000" height="4" fill="#242424" />
            {c.body}
            {c.leads.map(([a, b, d, e]) => <line key={a} x1={a} y1={b} x2={d} y2={e} stroke="#ccc" />)}
            {c.marks.map(([x, y, t]) => <text key={t} x={x} y={y} fill="#ccc">{t}</text>)}
          </g>
        </Canvas>
        <TimeScale>
          <g transform={`translate(${-c.ox} 0)`} fill={AXIS} shapeRendering="crispEdges">
            {c.ticks.map(x => <rect key={x} x={x} y="0" width="1" height="2" />)}
            {c.v.map(([x, t]) => <g key={x}><rect x={x} y="0" width="1" height="16" /><text x={x + 1} y="13" fill="#b41414">{t}</text></g>)}
          </g>
        </TimeScale>
      </PlotColumn>
      <AxisColumn>
        <RestoreButton aria-label="还原窗口">
          <svg width="13" height="13" viewBox="0 0 13 13" fill="none" stroke="red"><path d="M.5 .5h12v12H.5zM2.500 3.500h8v6h-8z" /></svg>
        </RestoreButton>
        {c.pager && <><PageButton>上页</PageButton><PageButton>下页</PageButton></>}
        <Canvas>
          <g transform={`translate(0 ${-axisTop})`} fill="#b41414" textAnchor="end">
            {c.prices.map(([y, t]) => <g key={t}><rect x="0" y={y} width="4" height="1" fill={AXIS} /><text x={right} y={y + 5}>{t}</text></g>)}
            <path d={`M-1 ${c.last[0]}l7-7h60v13h-60z`} fill="#fff" stroke="#aaa" />
            <text x={right} y={c.last[0] + 4} fill="#e60000">{c.last[1]}</text>
          </g>
        </Canvas>
        <PeriodLabel $pad={c.axis > 50 ? 10 : 7}>日线</PeriodLabel>
      </AxisColumn>
    </ChartPanel>
  );
};

const TrendIcon = <svg width="20" height="14" viewBox="0 0 20 14" fill="none" stroke="currentColor"><path d="M0 12.500h20M1 10L7 3l4 4 8-6" /></svg>;
const TrendBoxIcon = <svg width="20" height="16" viewBox="0 0 20 16" fill="none" stroke="currentColor"><path d="M.5 .5h19v14H.5zM2 10l5-5 4 4 6-6" /></svg>;
const PERIODS: [string, React.ReactNode, boolean?, boolean?][] = [['分时', TrendIcon], ['BS', 'BS'], ['分时图', TrendBoxIcon], ['S', 'S'], ['1分', '1分', true], ['M1', 'M1'], ['3分', '3分', true], ['5分', '5分', true], ['10', '10'], ['15', '15'], ['30', '30'], ['时', '时'], ['H2', 'H2'], ['日', '日', false, true], ['R', 'R'], ['周', '周'], ['月', '月'], ['季', '季'], ['年', '年']];
const ACTIONS: [string, number][] = [['快捷平仓', 70], ['全部平仓', 70], ['快捷反手', 70], ['刷新', 40], ['止损止盈', 70], ['条件单', 70], ['画线单', 70]];
const CANCELS: [string, number][] = [['撤单', 40], ['全部撤单', 70], ['刷新', 40], ['对价追', 50]];
const POSITIONS: [string, number][] = [['序..', 25], ['品种', 240], ['均价', 65], ['今持', 43], ['总持', 43], ['市价', 95], ['浮动盈亏', 101], ['盈亏率%', 97], ['保证金', 85], ['风险度', 69], ['投保', 53]];
const ORDERS: [string, number][] = [['序号', 45], ['品种', 118], ['方向', 45], ['类型', 56], ['数量', 90], ['限价', 0]];

const Spin = () => (
  <Spinner>
    <SpinButton type="button" aria-label="增加"><svg width="5" height="4" viewBox="0 0 5 4"><path d="M0 4h5L2.500 0z" fill="#999" /></svg></SpinButton>
    <SpinButton type="button" aria-label="减少"><Caret c="#999" /></SpinButton>
  </Spinner>
);

export default function App() {
  return (
    <Page>
      <GlobalStyle />
      <TitleBar>
        {TITLE_ICONS.map(([l, i]) => <TitleButton key={l} aria-label={l}>{i}</TitleButton>)}
        <TitleButton aria-label="最小化"><Glyph fill="M5 9h6v2H5z" /></TitleButton>
        <TitleButton $w={34} aria-label="最大化"><svg width="10" height="10" viewBox="0 0 10 10" fill="none" stroke="#fff"><path d="M.5 1h9v8.500h-9z" /><path d="M0 1h10" strokeWidth="2" /></svg></TitleButton>
        <TitleButton $w={36} aria-label="关闭"><svg width="8" height="8" viewBox="0 0 8 8" stroke="#fff" strokeWidth="2"><path d="M1 1l6 6M7 1L1 7" /></svg></TitleButton>
      </TitleBar>
      <MenuBar>{['交易(O)', '分析(A)', '工具(T)', '窗口(W)', '帮助(H)'].map(m => <MenuItem key={m}>{m}</MenuItem>)}</MenuBar>
      <Toolbar>{TOOLS.map((t, i) => <ToolItem key={i} t={t} />)}</Toolbar>
      <TabStrip>
        <DockClose aria-label="关闭侧栏">×</DockClose>
        <Tab>
          <svg width="22" height="20" viewBox="0 0 22 20" fill="none" stroke="#777" strokeWidth="1.500"><path d="M0 19.500h1.500L22 1" /></svg>
          <TabFace><TabLabel>综合管理</TabLabel><TabClose aria-label="关闭综合管理">×</TabClose></TabFace>
        </Tab>
        <Tab>
          <svg width="6" height="20" viewBox="0 0 6 20" fill="none" stroke="#777" strokeWidth="1.500"><path d="M0 9L6 1" /></svg>
          <TabFace><TabLabel>动态显示牌</TabLabel><TabClose aria-label="关闭动态显示牌">×</TabClose></TabFace>
        </Tab>
        <Tab $overlap>
          <svg width="22" height="20" viewBox="0 0 22 20" fill="none" stroke="#777" strokeWidth="1.500"><path d="M0 19.500L22 1" /></svg>
          <TabFace $on><TabLabel>4股同列(点击翻页)</TabLabel><TabClose aria-label="关闭4股同列">×</TabClose></TabFace>
        </Tab>
        <TabRule />
        <TabMenu aria-label="标签菜单"><svg width="9" height="8" viewBox="0 0 9 8" stroke="#ddd" strokeWidth="2"><path d="M0 1h9M0 4h9M0 7h9" /></svg></TabMenu>
      </TabStrip>
      <Workspace>
        <LeftDock />
        <Center>
          <ChartGrid>{CHARTS.map(c => <ChartView key={c.title} c={c} />)}</ChartGrid>
          <Splitter />
          <Account>
            <AccountHead>
              账户栏  -  未登录
              <HeadTools>
                <ViewButtons><SquareButton>统</SquareButton><SquareButton>详</SquareButton><SquareButton>登</SquareButton></ViewButtons>
                <PlainButton $w={20} aria-label="工具"><Glyph w={2}><path d="M2 14L11 4" stroke="#b8a000" /><path d="M5 5l9 9" stroke="#888" /><path d="M1 5l4-4 3 1-4 4z" fill="#888" stroke="none" /><path d="M10 5l1-3 3-1M12 6l3-2" stroke="#f0e000" /></Glyph></PlainButton>
                <PlainButton $w={12} aria-label="展开"><svg width="9" height="6" viewBox="0 0 9 6"><path d="M0 0h9L4.500 5z" fill="#ccc" /></svg></PlainButton>
                <PlainButton $w={18} aria-label="固定"><svg width="8" height="10" viewBox="0 0 8 10" fill="none" stroke="#ccc"><path d="M2 .5h4V6H2zM.5 6.500h7M4 7v3" /></svg></PlainButton>
                <PlainButton $w={14} aria-label="关闭账户栏">×</PlainButton>
              </HeadTools>
            </AccountHead>
            <AccountBody>
              <OrderForm>
                <FormRow>
                  <Field $w={78} aria-label="合约代码" defaultValue="BZ06" />
                  <SmallButton type="button" $w={19} aria-label="锁定合约"><svg width="12" height="14" viewBox="0 0 12 14"><path d="M3 6V3.500a2.500 2.500 0 0 1 5 0V5" fill="none" stroke="#00a000" strokeWidth="1.300" /><path d="M0 6h11v7H0z" fill="#008c00" /><path d="M5 8h2v3H5z" fill="#dede00" /></svg></SmallButton>
                  <SmallButton type="button" $w={23} aria-label="更多">. . .</SmallButton>
                  <Choice $w={82} $b aria-label="开平方式"><option>1.自动</option></Choice>
                </FormRow>
                <FormRow>
                  <Field $w={98} aria-label="合约名称" defaultValue="纯苯2606" />
                  <FormLabel htmlFor="qty">数量</FormLabel>
                  <Field id="qty" $w={66} $b defaultValue="1" />
                  <Spin />
                </FormRow>
                <FormRow>
                  <Choice $w={98} aria-label="委托类型"><option>1限价</option></Choice>
                  <FormLabel htmlFor="price">价格</FormLabel>
                  <Field id="price" $w={66} $b defaultValue="对手价" />
                  <Spin />
                </FormRow>
              </OrderForm>
              <GridPane $w={959}>
                <ActionBar $pad={5}>{ACTIONS.map(([t, w]) => <ActionButton key={t} $w={w}>{t}</ActionButton>)}</ActionBar>
                <TableArea>
                  <Table><thead><tr>{POSITIONS.map(([t, w], i) => <Th key={t} $w={w} $right={i > 1}>{t}</Th>)}<Th /></tr></thead></Table>
                </TableArea>
              </GridPane>
              <GridPane>
                <ActionBar $pad={18}>{CANCELS.map(([t, w]) => <ActionButton key={t} $w={w}>{t}</ActionButton>)}</ActionBar>
                <TableArea>
                  <Table><thead><tr>{ORDERS.map(([t, w]) => <Th key={t} $w={w}>{t}</Th>)}</tr></thead></Table>
                </TableArea>
              </GridPane>
            </AccountBody>
          </Account>
        </Center>
        <RightDock>
          <PeriodList>
            <DockDots />
            {PERIODS.map(([l, t, indent, on]) => <PeriodButton key={l} aria-label={l} $indent={indent} $on={on}>{t}</PeriodButton>)}
            <CollapseButton aria-label="收起"><svg width="4" height="5" viewBox="0 0 4 5"><path d="M4 0v5L0 2.500z" fill="#fff" /></svg></CollapseButton>
          </PeriodList>
        </RightDock>
      </Workspace>
      <Overlay fill="#ff3b3b">
        <rect x="776" y="94" width="69" height="88" rx="2" fill="none" stroke="#ff3b3b" strokeWidth="4" />
        <path d="M318 94L335 104L330 108L407 234L324 112L321 115z" />
        <path d="M790 154L790 171L786 170L709 299L779 167L777 162z" />
      </Overlay>
    </Page>
  );
}
